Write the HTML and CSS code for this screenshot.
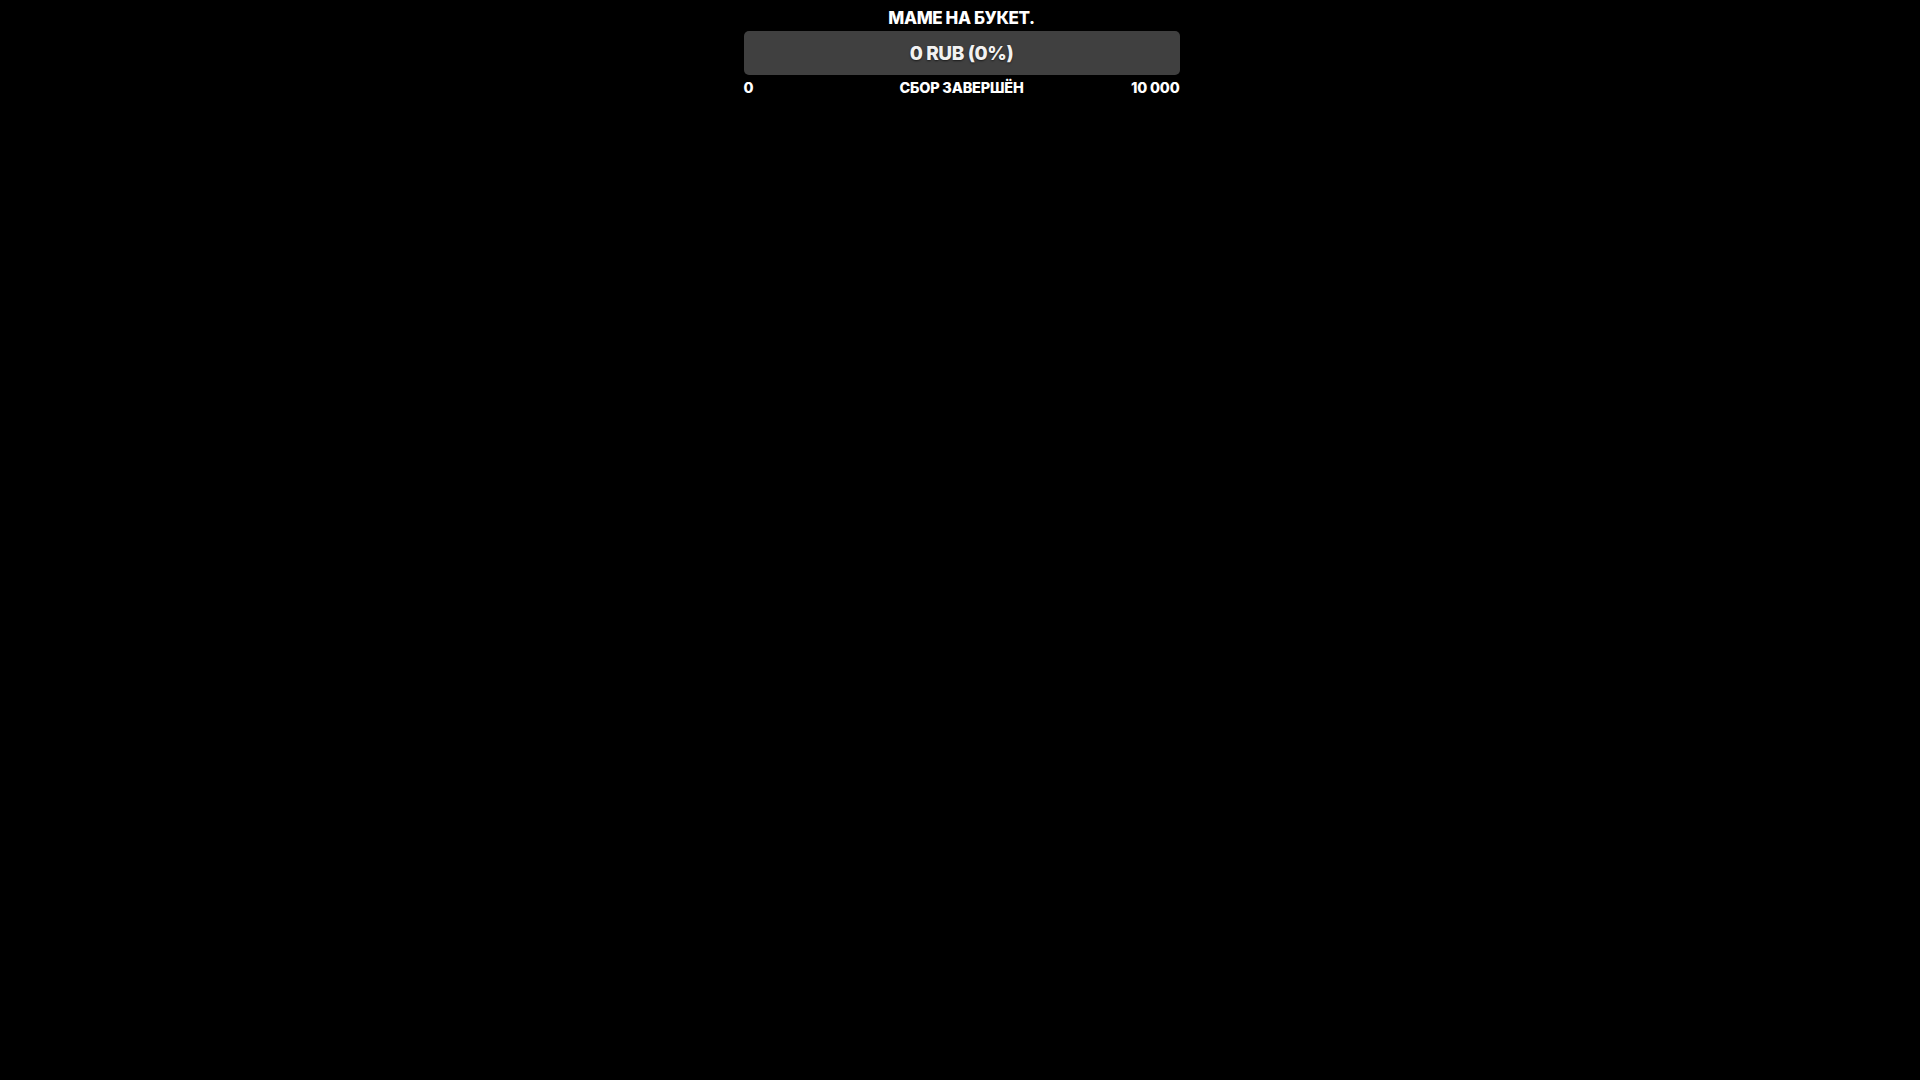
FILE: index.html
```html
<!DOCTYPE html>
<html lang="ru">
<head>
<meta charset="utf-8">
<title>Сбор</title>
<link rel="stylesheet" href="styles.css">
</head>
<body>
<div class="page">
  <div class="goal">
    <div class="goal-title">МАМЕ НА БУКЕТ.</div>
    <div class="goal-bar">
      <span class="goal-amount">0 RUB (0%)</span>
    </div>
    <div class="goal-scale">
      <span class="scale-min">0</span>
      <span class="scale-status">СБОР ЗАВЕРШЁН</span>
      <span class="scale-max">10 000</span>
    </div>
  </div>
</div>
</body>
</html>
```

FILE: styles.css
```css
html, body {
  margin: 0;
  padding: 0;
  background: #000;
  height: 100%;
}
body {
  font-family: Inter, "Noto Sans", Roboto, sans-serif;
  color: #fff;
}
.page {
  display: flex;
  justify-content: center;
  padding-left: 3px;
  padding-top: 7px;
}
.goal {
  width: 436px;
  display: flex;
  flex-direction: column;
}
.goal-title {
  text-align: center;
  font-weight: 800;
  font-size: 17px;
  line-height: 22px;
  letter-spacing: -0.4px;
  margin-bottom: 2px;
}
.goal-bar {
  height: 44px;
  background: #404040;
  border-radius: 5px;
  display: flex;
  align-items: center;
  justify-content: center;
}
.goal-amount {
  font-weight: 800;
  font-size: 19px;
  letter-spacing: -0.4px;
  color: #f2f2f2;
  text-shadow: 0 1px 2px rgba(0,0,0,0.6);
}
.goal-scale {
  display: grid;
  grid-template-columns: 1fr auto 1fr;
  font-weight: 800;
  font-size: 14.5px;
  line-height: 18px;
  margin-top: 4px;
  letter-spacing: -0.2px;
}
.scale-min { text-align: left; }
.scale-status { text-align: center; }
.scale-max { text-align: right; }
```
